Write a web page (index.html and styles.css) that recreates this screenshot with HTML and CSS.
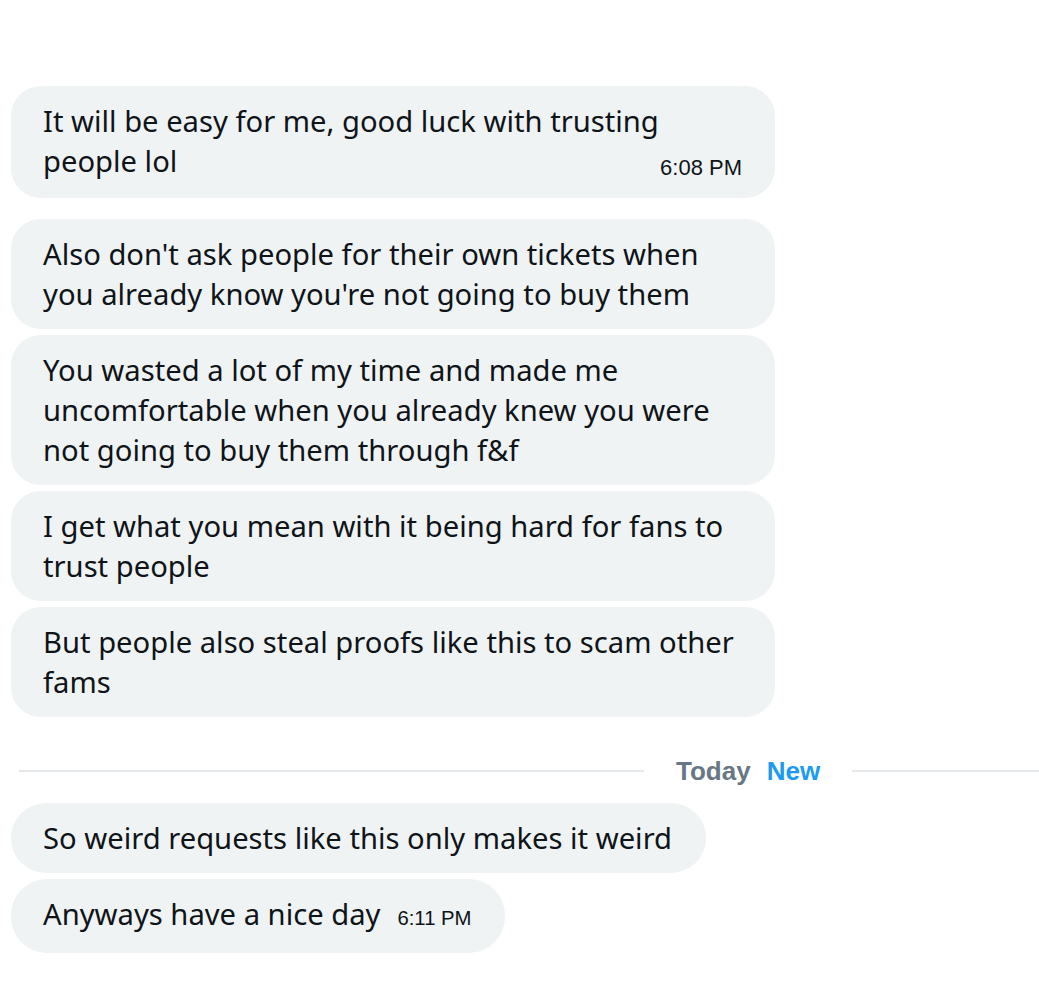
FILE: index.html
```html
<!DOCTYPE html>
<html>
<head>
<meta charset="utf-8">
<link rel="stylesheet" href="styles.css">
</head>
<body>
<div class="chat">
  <div class="group">
    <div class="bubble full first">It will be easy for me, good luck with trusting people lol<span class="time float">6:08 PM</span></div>
  </div>
  <div class="group g2">
    <div class="bubble full">Also don't ask people for their own tickets when you already know you're not going to buy them</div>
    <div class="bubble full">You wasted a lot of my time and made me uncomfortable when you already knew you were not going to buy them through f&amp;f</div>
    <div class="bubble full">I get what you mean with it being hard for fans to trust people</div>
    <div class="bubble full">But people also steal proofs like this to scam other fams</div>
  </div>
  <div class="divider">
    <div class="line left"></div>
    <div class="label"><span class="today">Today</span><span class="new">New</span></div>
    <div class="line right"></div>
  </div>
  <div class="group g3">
    <div class="bubble pill">So weird requests like this only makes it weird</div>
    <div class="bubble pill">Anyways have a nice day<span class="time inline">6:11 PM</span></div>
  </div>
</div>
</body>
</html>
```
FILE: styles.css
```css
html, body {
  margin: 0;
  padding: 0;
  background: #ffffff;
}
body {
  width: 1039px;
  height: 993px;
  overflow: hidden;
  font-family: "Noto Sans", "Open Sans", sans-serif;
  color: #0f1419;
}
.chat {
  padding-top: 86px;
  display: flex;
  flex-direction: column;
}
.group {
  display: flex;
  flex-direction: column;
  align-items: flex-start;
  gap: 6px;
  padding-left: 11px;
}
.g2 {
  margin-top: 21px;
}
.bubble {
  background: #eff3f4;
  border-radius: 30px;
  padding: 15px 34px 15px 32px;
  font-size: 29.2px;
  line-height: 40px;
  box-sizing: border-box;
}
.bubble.full {
  width: 764px;
  padding-right: 32px;
}
.bubble.first {
  padding-bottom: 16px;
}
.bubble.pill {
  border-radius: 36px;
}
.time {
  font-family: "Liberation Sans", Arial, sans-serif;
  color: #0f1419;
}
.time.float {
  float: right;
  font-size: 22px;
  line-height: 28px;
  margin-top: 13px;
  margin-right: 1px;
}
.time.inline {
  margin-left: 17px;
  font-size: 20.3px;
}
.divider {
  display: flex;
  align-items: center;
  margin-top: 39px;
  height: 30px;
  margin-bottom: 17px;
}
.line {
  height: 2px;
  background: #e4e8eb;
}
.line.left {
  width: 625px;
  margin-left: 19px;
}
.line.right {
  flex: 1;
}
.label {
  display: flex;
  gap: 16px;
  padding: 0 32px;
  font-family: "Liberation Sans", Arial, sans-serif;
  font-weight: bold;
  font-size: 26px;
}
.today {
  color: #687785;
}
.new {
  color: #1d9bf0;
}
```
